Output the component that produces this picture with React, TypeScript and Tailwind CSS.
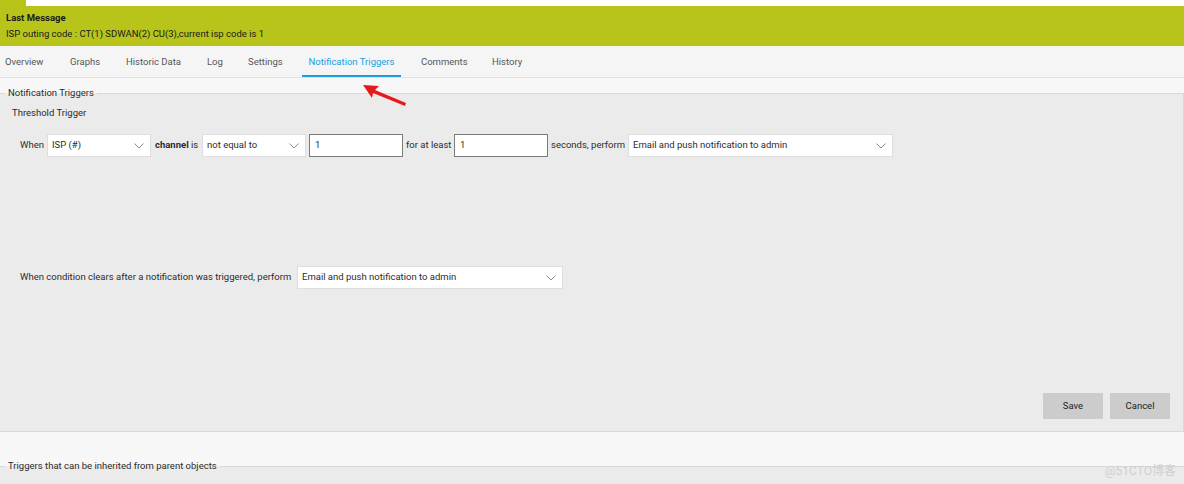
import React from "react";

const Chevron = () => (
  <svg width="10" height="6" viewBox="0 0 10 6" className="shrink-0">
    <polyline points="0.5,0.5 5,5 9.5,0.5" fill="none" stroke="#8a8a8a" strokeWidth="1" />
  </svg>
);

const Select = ({ value, className }: { value: string; className: string }) => (
  <div
    className={`flex h-[23px] shrink-0 items-center justify-between border border-[#dedede] bg-white pl-[4px] pr-[6px] ${className}`}
  >
    <span>{value}</span>
    <Chevron />
  </div>
);

const Input = ({ value, className }: { value: string; className: string }) => (
  <div className={`flex h-[23px] shrink-0 items-center border border-[#7a7a7a] bg-white pl-[5px] ${className}`}>
    {value}
  </div>
);

const tabs = [
  { label: "Overview", w: "w-[65px]" },
  { label: "Graphs", w: "w-[56px]" },
  { label: "Historic Data", w: "w-[81px]" },
  { label: "Log", w: "w-[41px]" },
  { label: "Settings", w: "w-[54px]" },
];

export default function App() {
  return (
    <div className="relative h-[484px] w-[1184px] overflow-hidden bg-[#f7f7f7] font-['Roboto','Noto_Sans_CJK_SC',sans-serif] text-[9.5px] text-[#2b2b2b]">
      {/* top strip */}
      <div className="flex h-[6px] bg-white">
        <div className="w-[26px] bg-[#b9c41b]" />
      </div>

      {/* last message */}
      <div className="flex h-[40px] flex-col justify-center gap-[2px] bg-[#b9c41b] px-[6px] text-[#1a1a1a]">
        <div className="font-bold leading-[14px]">Last Message</div>
        <div className="leading-[14px]">ISP outing code : CT(1) SDWAN(2) CU(3),current isp code is 1</div>
      </div>

      {/* tabs */}
      <div className="flex h-[32px] items-stretch border-b border-[#e2e2e2] bg-[#f5f5f5] pl-[5px] text-[#555]">
        {tabs.map((t) => (
          <div key={t.label} className={`flex items-center pt-[1px] ${t.w}`}>
            {t.label}
          </div>
        ))}
        <div className="flex w-[99px] items-center justify-center border-b-2 border-[#1a9ee0] pt-[3px] text-[#1a9ee0]">
          Notification Triggers
        </div>
        <div className="ml-[20px] flex w-[71px] items-center pt-[1px]">Comments</div>
        <div className="flex items-center pt-[1px]">History</div>
      </div>

      {/* notification triggers */}
      <fieldset className="mt-[8px] border-y border-r border-[#d9d9d9] bg-[#ebebeb]">
        <legend className="ml-[5px] px-[3px] leading-[14px]">Notification Triggers</legend>
        <div className="flex flex-col px-[12px] pb-[12px]">
          <div className="mt-[6px] leading-[14px]">Threshold Trigger</div>

          <div className="mt-[14px] flex items-center pl-[8px]">
            <span className="w-[27px] shrink-0">When</span>
            <Select value="ISP (#)" className="w-[104px]" />
            <span className="w-[51px] shrink-0 pl-[4px]">
              <b>channel</b> is
            </span>
            <Select value="not equal to" className="w-[104px]" />
            <Input value="1" className="ml-[3px] w-[94px]" />
            <span className="w-[51px] shrink-0 pl-[3px]">for at least</span>
            <Input value="1" className="w-[94px]" />
            <span className="w-[80px] shrink-0 pl-[3px]">seconds, perform</span>
            <Select value="Email and push notification to admin" className="w-[265px]" />
          </div>

          <div className="mt-[109px] flex items-center pl-[8px]">
            <span className="w-[277px] shrink-0">When condition clears after a notification was triggered, perform</span>
            <Select value="Email and push notification to admin" className="w-[266px]" />
          </div>

          <div className="mt-[104px] flex justify-end gap-[7px] pr-[1px]">
            <button className="h-[26px] w-[60px] bg-[#cccccc] text-[#222]">Save</button>
            <button className="h-[26px] w-[60px] bg-[#cccccc] text-[#222]">Cancel</button>
          </div>
        </div>
      </fieldset>

      {/* inherited triggers */}
      <fieldset className="mt-[27px] h-[60px] border-t border-[#d9d9d9] bg-[#ebebeb]">
        <legend className="ml-[5px] px-[3px] leading-[14px]">Triggers that can be inherited from parent objects</legend>
      </fieldset>

      {/* red arrow */}
      <svg className="absolute left-[360px] top-[80px]" width="50" height="30" viewBox="0 0 50 30">
        <polygon points="3,5 19,6 15,10 46,23 45,26 13,13 12,18" fill="#e8191c" />
      </svg>

      {/* watermark */}
      <div className="absolute right-[8px] top-[462px] text-[12px] text-[#cfcfcf]">@51CTO博客</div>
    </div>
  );
}
